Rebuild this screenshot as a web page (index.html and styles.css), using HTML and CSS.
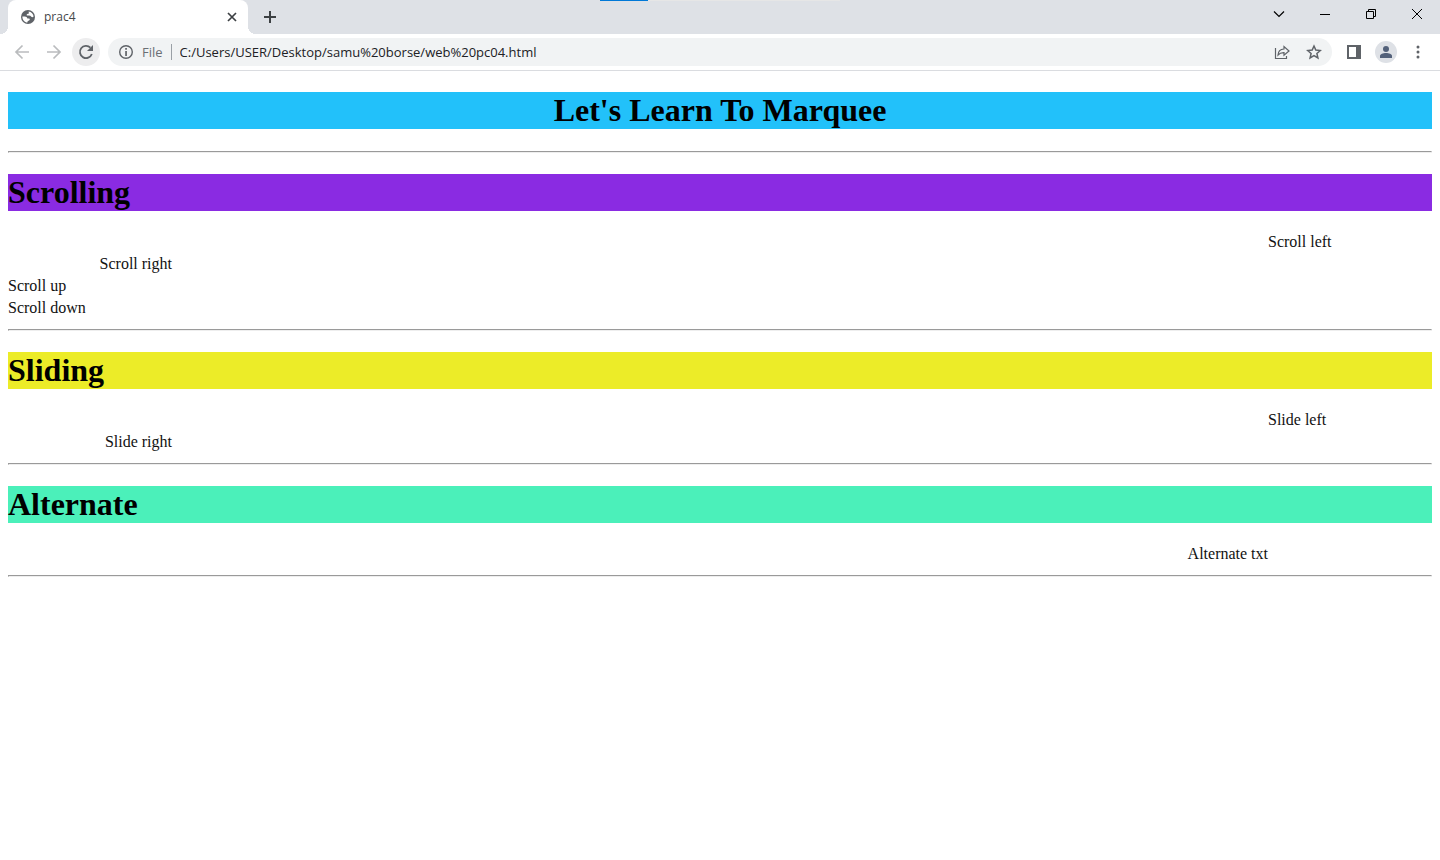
FILE: index.html
```
<!DOCTYPE html>
<html lang="en">
<head>
<meta charset="utf-8">
<title>prac4</title>
<link rel="stylesheet" href="styles.css">
</head>
<body>
<header class="browser">
  <div class="tabstrip">
    <div class="progress"><div class="progress-value"></div></div>
    <div class="tab">
      <svg class="favicon" width="16" height="16" viewBox="0 0 16 16"><circle cx="8" cy="8" r="7" fill="#5f6368"/><path d="M8.6 2.4c2.8.3 4.8 2.500 5 5.200-.8.7-1.600.7-2.300.2-.5-.8-1.300-1.200-2.300-1.200H7.500c-.6 0-.9-.4-.8-.9.2-.6 1-.6 1.700-.9.700-.5.400-1.500.2-2.400zM2.400 7.600h2.500c1.300 0 2.300.8 2.500 1.900h1.700c.8.2.9 1.200.3 1.700-.5.500-1.300.4-1.700 1-.3.500-.3.900-.3 1.400C4.600 13.400 2.400 11 2.400 8z" fill="#fff"/></svg>
      <span class="tab-title">prac4</span>
      <button class="tab-close" aria-label="Close tab"><svg width="16" height="16" viewBox="0 0 16 16" fill="none" stroke="#3c4043" stroke-width="1.700"><path d="M4 4l8 8M12 4l-8 8"/></svg></button>
    </div>
    <button class="new-tab" aria-label="New tab"><svg width="16" height="16" viewBox="0 0 16 16" fill="none" stroke="#3c4043" stroke-width="2"><path d="M8 2v12M2 8h12"/></svg></button>
    <div class="window-controls">
      <button aria-label="Search tabs"><svg width="12" height="12" viewBox="0 0 12 12" fill="none" stroke="#000" stroke-width="1.200"><path d="M1 3.500l5 5 5-5"/></svg></button>
      <button aria-label="Minimize"><svg width="12" height="12" viewBox="0 0 12 12" fill="none" stroke="#000"><path d="M1 6.500h10"/></svg></button>
      <button aria-label="Restore"><svg width="12" height="12" viewBox="0 0 12 12" fill="none" stroke="#000"><path d="M1.500 3.500h7v7h-7zM3.500 3.500v-2h7v7h-2"/></svg></button>
      <button aria-label="Close"><svg width="12" height="12" viewBox="0 0 12 12" fill="none" stroke="#000"><path d="M1 1l10 10M11 1L1 11"/></svg></button>
    </div>
  </div>
  <div class="toolbar">
    <div class="nav">
      <button class="round" aria-label="Back" disabled><svg width="16" height="16" viewBox="0 0 16 16" fill="none" stroke="#babcbe" stroke-width="1.700"><path d="M15 8H2M8.500 1.500L2 8l6.500 6.500"/></svg></button>
      <button class="round" aria-label="Forward" disabled><svg width="16" height="16" viewBox="0 0 16 16" fill="none" stroke="#babcbe" stroke-width="1.700"><path d="M1 8h13M7.500 1.500L14 8l-6.500 6.500"/></svg></button>
      <button class="round hovered" aria-label="Reload"><svg width="16" height="16" viewBox="0 0 16 16"><path d="M13.800 10A6.100 6.100 0 1 1 12.400 3.700" fill="none" stroke="#5f6368" stroke-width="1.800"/><path d="M15 1v6H9z" fill="#5f6368"/></svg></button>
    </div>
    <div class="omnibox">
      <svg width="16" height="16" viewBox="0 0 16 16"><circle cx="8" cy="8" r="6.300" fill="none" stroke="#5f6368" stroke-width="1.400"/><path d="M7.200 4h1.700v1.700H7.200zM7.200 7h1.700v5H7.200z" fill="#5f6368"/></svg>
      <label class="scheme" for="url">File</label>
      <input class="url" id="url" type="text" value="C:/Users/USER/Desktop/samu%20borse/web%20pc04.html">
      <button aria-label="Share"><svg width="16" height="16" viewBox="0 0 16 16" fill="none" stroke="#5f6368" stroke-width="1.200"><path d="M1.500 4v10.500h11V12M4 11c.2-3.800 2.300-5.800 6-6V2.500L15 7l-5 4.200V8.600C7.300 8.500 5.500 9.200 4 11z"/></svg></button>
      <button aria-label="Bookmark this page"><svg width="16" height="16" viewBox="0 0 16 16" fill="none" stroke="#5f6368" stroke-width="1.500"><path d="M8 2l1.800 4.100 4.500.4-3.400 3 1 4.400L8 11.600l-3.900 2.300 1-4.400-3.400-3 4.500-.4z"/></svg></button>
    </div>
    <div class="actions">
      <button aria-label="Side panel"><svg width="16" height="16" viewBox="0 0 16 16"><path d="M1 1h14v14H1z" fill="#5f6368"/><path d="M3 3h7v10H3z" fill="#fff"/></svg></button>
      <button class="profile" aria-label="Profile"><svg width="14" height="14" viewBox="0 0 14 14" fill="#53617a"><circle cx="7" cy="4" r="3"/><path d="M1 13v-2c0-2 3-3 6-3s6 1 6 3v2z"/></svg></button>
      <button aria-label="Menu"><svg width="16" height="16" viewBox="0 0 16 16" fill="#5f6368"><circle cx="8" cy="3" r="1.500"/><circle cx="8" cy="8" r="1.500"/><circle cx="8" cy="13" r="1.500"/></svg></button>
    </div>
  </div>
</header>
<main class="page">
  <h1 class="banner intro">Let's Learn To Marquee</h1>
  <hr class="rule after-heading">
  <h1 class="banner scrolling">Scrolling</h1>
  <div class="line from-right">Scroll left</div>
  <div class="line from-left">Scroll right</div>
  <div class="line">Scroll up</div>
  <div class="line">Scroll down</div>
  <hr class="rule">
  <h1 class="banner sliding">Sliding</h1>
  <div class="line from-right">Slide left</div>
  <div class="line from-left">Slide right</div>
  <hr class="rule">
  <h1 class="banner alternate">Alternate</h1>
  <div class="line back-and-forth">Alternate txt</div>
  <hr class="rule">
</main>
</body>
</html>
```
FILE: styles.css
```
* { box-sizing: border-box; }
body { margin: 0; background: #fff; color: #000; font-family: "Liberation Serif", "Times New Roman", serif; font-size: 16px; }
svg { display: block; flex: none; }
button { display: flex; align-items: center; justify-content: center; padding: 0; border: 0; background: none; }
.browser { font-family: "Open Sans", "Noto Sans", sans-serif; border-bottom: 1px solid #dadce0; }

.tabstrip { position: relative; display: flex; height: 34px; padding-left: 8px; background: #dee1e6; }
.progress { position: absolute; top: 0; left: 50%; width: 240px; height: 1px; margin-left: -120px; background: #e6e6e6; }
.progress-value { width: 20%; height: 1px; background: #0078d7; }
.tab { position: relative; display: flex; align-items: center; gap: 8px; width: 240px; padding: 0 8px 0 12px; border-radius: 8px 8px 0 0; background: #fff; }
.tab::before, .tab::after { content: ""; position: absolute; bottom: 0; width: 8px; height: 8px; }
.tab::before { right: 100%; background: radial-gradient(circle at 0 0, #dee1e6 8px, #fff 8px); }
.tab::after { left: 100%; background: radial-gradient(circle at 100% 0, #dee1e6 8px, #fff 8px); }
.tab-title { flex: 1; font-size: 12px; line-height: 16px; color: #45474a; }
.new-tab { width: 28px; margin-left: 8px; }
.window-controls { display: flex; height: 28px; margin-left: auto; }
.window-controls button { width: 46px; }

.toolbar { display: flex; align-items: center; height: 36px; padding: 0 8px; gap: 8px; }
.nav { display: flex; gap: 4px; }
.round { width: 28px; height: 28px; border-radius: 50%; }
.hovered { background: #ededee; }
.omnibox { display: flex; flex: 1; align-items: center; height: 28px; padding: 0 10px; gap: 8px; border-radius: 14px; background: #f1f3f4; }
.scheme { padding-right: 8px; border-right: 1px solid #9aa0a6; font-size: 13px; line-height: 16px; color: #6b6f74; }
.url { flex: 1; min-width: 0; padding: 0; border: 0; outline: 0; background: none; font-family: inherit; font-size: 13px; line-height: 20px; color: #202124; }
.omnibox button + button { margin-left: 8px; }
.actions { display: flex; align-items: center; gap: 10px; padding: 0 3px; }
.actions button { width: 22px; height: 22px; }
.profile { border-radius: 50%; background: #dee1e6; }

.page { padding: 21px 8px; }
.banner { margin: 0 0 21px; font-size: 32px; line-height: 37px; font-weight: bold; }
.intro { text-align: center; background: #22c1fa; }
.scrolling { background: #8a2be2; }
.sliding { background: #ecec28; }
.alternate { background: #4bf0ba; }
.line { height: 22px; line-height: 20px; color: #111; }
.from-right { width: 164px; margin-left: auto; }
.from-left { width: 164px; text-align: right; }
.back-and-forth { padding-right: 164px; text-align: right; }
.rule { height: 2px; margin: 9px 0 21px; border: 1px solid; border-color: #9a9a9a #eee #eee #9a9a9a; }
.after-heading { margin-top: 22px; }
```
